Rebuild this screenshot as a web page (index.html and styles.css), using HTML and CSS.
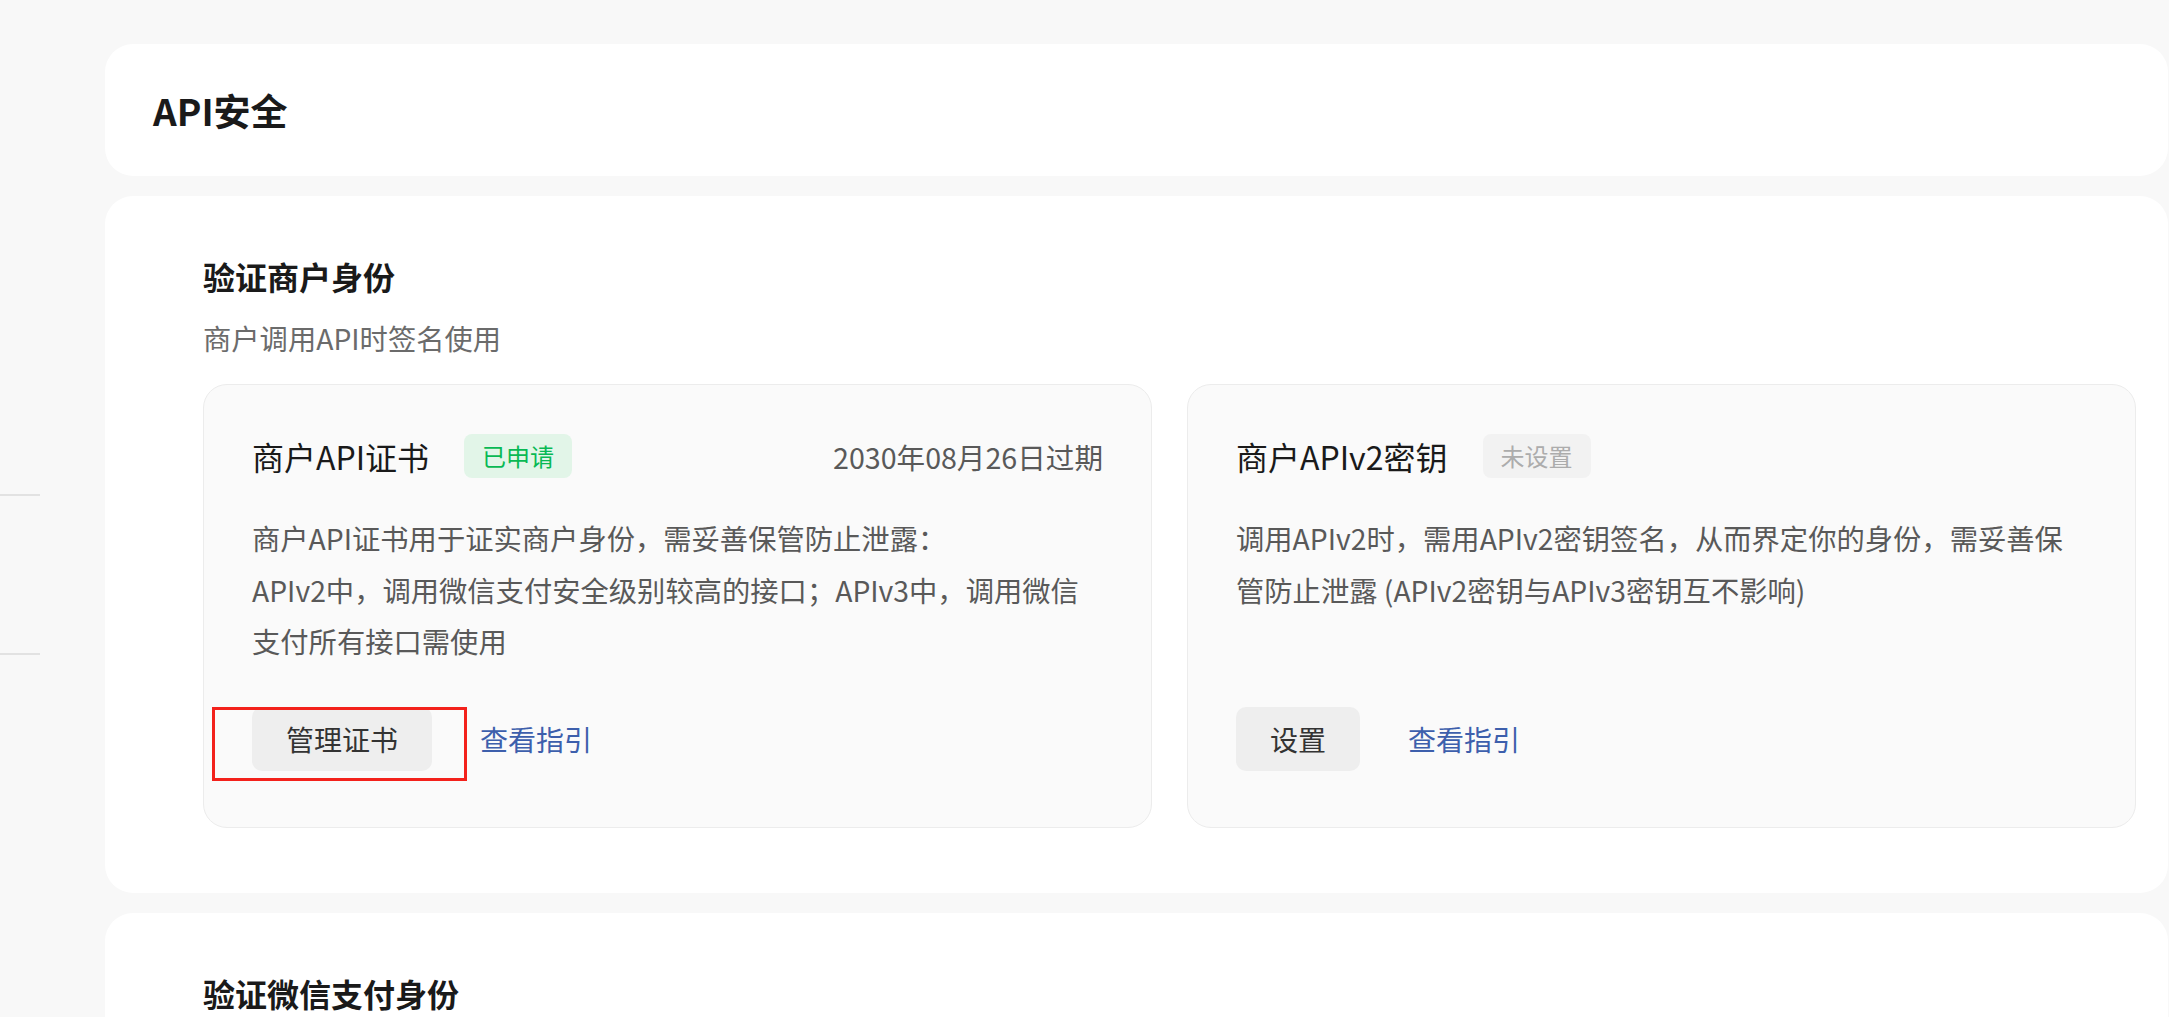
FILE: index.html
```html
<!DOCTYPE html>
<html lang="zh-CN">
<head>
<meta charset="utf-8">
<title>API安全</title>
<link rel="stylesheet" href="styles.css">
</head>
<body>
<div class="layout">
  <aside class="sidebar">
    <div class="side-line"></div>
    <div class="side-gap"></div>
    <div class="side-line"></div>
  </aside>
  <main class="main">
    <section class="panel panel-head">
      <h1 class="page-title">API安全</h1>
    </section>

    <section class="panel panel-section">
      <h2 class="section-title">验证商户身份</h2>
      <p class="section-sub">商户调用API时签名使用</p>
      <div class="cards">
        <div class="card">
          <div class="card-head">
            <span class="card-title">商户API证书</span>
            <span class="badge badge-ok">已申请</span>
            <span class="card-date">2030年08月26日过期</span>
          </div>
          <p class="card-desc">商户API证书用于证实商户身份，需妥善保管防止泄露：<br>APIv2中，调用微信支付安全级别较高的接口；APIv3中，调用微信<br>支付所有接口需使用</p>
          <div class="card-actions">
            <button class="btn">管理证书</button>
            <a class="link" href="#">查看指引</a>
            <span class="mark"></span>
          </div>
        </div>
        <div class="card">
          <div class="card-head">
            <span class="card-title">商户APIv2密钥</span>
            <span class="badge badge-off">未设置</span>
          </div>
          <p class="card-desc">调用APIv2时，需用APIv2密钥签名，从而界定你的身份，需妥善保<br>管防止泄露 (APIv2密钥与APIv3密钥互不影响)</p>
          <div class="card-actions">
            <button class="btn">设置</button>
            <a class="link" href="#">查看指引</a>
          </div>
        </div>
      </div>
    </section>

    <section class="panel panel-section panel-last">
      <h2 class="section-title">验证微信支付身份</h2>
    </section>
  </main>
</div>
</body>
</html>
```

FILE: styles.css
```css
html, body {
  margin: 0;
  padding: 0;
  height: 100%;
  overflow: hidden;
  background: #f8f8f8;
  font-family: "Noto Sans CJK SC", "Noto Sans", sans-serif;
  color: #1a1a1a;
}

.layout {
  display: flex;
  align-items: flex-start;
}

.sidebar {
  width: 40px;
  flex: none;
  padding-top: 494px;
}

.side-line {
  height: 2px;
  background: #e2e2e2;
}

.side-gap {
  height: 157px;
}

.main {
  flex: 1;
  padding: 44px 1px 0 65px;
  display: flex;
  flex-direction: column;
  gap: 20px;
}

.panel {
  background: #ffffff;
  border-radius: 28px;
}

.panel-head {
  height: 132px;
  display: flex;
  align-items: center;
  padding: 0 48px;
}

.page-title {
  margin: 0;
  font-size: 37px;
  font-weight: 700;
  line-height: 48px;
  color: #1a1a1a;
}

.panel-section {
  padding: 58px 32px 65px 98px;
}

.panel-last {
  height: 400px;
}

.section-title {
  margin: 0;
  font-size: 32px;
  font-weight: 700;
  line-height: 44px;
  color: #1a1a1a;
}

.section-sub {
  margin: 20px 0 0;
  font-size: 28.3px;
  line-height: 40px;
  color: #6b6b6b;
}

.cards {
  margin-top: 26px;
  display: grid;
  grid-template-columns: 1fr 1fr;
  column-gap: 35px;
}

.card {
  background: #fafafa;
  border: 1px solid #ececec;
  border-radius: 24px;
  padding: 49px 48px 56px 48px;
  display: flex;
  flex-direction: column;
}

.card-head {
  display: flex;
  align-items: center;
  height: 44px;
}

.card-title {
  font-size: 32px;
  line-height: 44px;
  color: #1a1a1a;
}

.badge {
  margin-left: 35px;
  height: 44px;
  line-height: 44px;
  padding: 0 18px;
  border-radius: 8px;
  font-size: 24px;
}

.badge-ok {
  background: #e2f5e8;
  color: #09b954;
}

.badge-off {
  background: #f2f2f2;
  color: #acacac;
}

.card-date {
  margin-left: auto;
  font-size: 28.6px;
  color: #595959;
}

.card-desc {
  margin: 34px 0 40px;
  font-size: 28.3px;
  line-height: 51.5px;
  color: #595959;
}

.card-actions {
  margin-top: auto;
  display: flex;
  align-items: center;
  position: relative;
}

.btn {
  height: 64px;
  padding: 0 34px;
  border: none;
  border-radius: 10px;
  background: #eeeeee;
  font-family: inherit;
  font-size: 28px;
  line-height: 64px;
  color: #333333;
}

.link {
  margin-left: 48px;
  font-size: 28px;
  color: #3d5fac;
  text-decoration: none;
}

.mark {
  position: absolute;
  left: -40px;
  top: 0;
  width: 255px;
  height: 74px;
  box-sizing: border-box;
  border: 3px solid #f3211b;
}
```
